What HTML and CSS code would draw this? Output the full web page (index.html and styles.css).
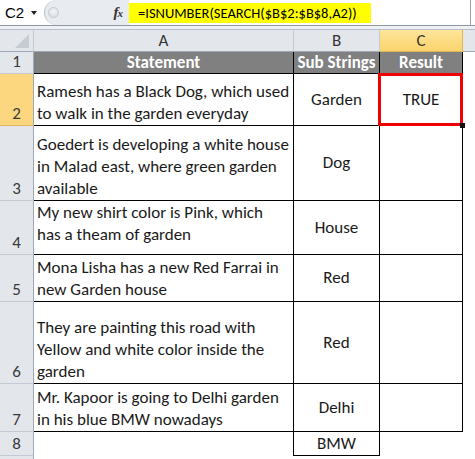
FILE: index.html
```html
<!DOCTYPE html>
<html>
<head>
<meta charset="utf-8">
<link rel="stylesheet" href="styles.css">
</head>
<body>
<div class="app">
  <div class="fbar">
    <div class="namebox"><span class="ref">C2</span><span class="drop"></span></div>
    <div class="grip"><span class="knob"></span><span class="fx">f<sub>x</sub></span></div>
    <div class="formula"><span class="ftext">=ISNUMBER(SEARCH($B$2:$B$8,A2))</span></div>
    <div class="fend"></div>
  </div>
  <div class="sep"></div>
  <div class="sheet">
    <div class="ch corner"><span class="tri"></span></div>
    <div class="ch">A</div>
    <div class="ch">B</div>
    <div class="ch sel">C</div>
    <div class="ch last"></div>

    <div class="rh">1</div>
    <div class="c hd">Statement</div>
    <div class="c hd">Sub Strings</div>
    <div class="c hd">Result</div>
    <div class="c e"></div>

    <div class="rh rsel">2</div>
    <div class="c a"><p>Ramesh has a Black Dog, which used<br>to walk in the garden everyday</p></div>
    <div class="c b">Garden</div>
    <div class="c b cur">TRUE<span class="selbox"></span><span class="handle"></span></div>
    <div class="c e"></div>

    <div class="rh">3</div>
    <div class="c a"><p>Goedert is developing a white house<br>in Malad east, where green garden<br>available</p></div>
    <div class="c b">Dog</div>
    <div class="c b"></div>
    <div class="c e"></div>

    <div class="rh">4</div>
    <div class="c a r4"><p>My new shirt color is Pink, which<br>has a theam of garden</p></div>
    <div class="c b">House</div>
    <div class="c b"></div>
    <div class="c e"></div>

    <div class="rh">5</div>
    <div class="c a"><p>Mona Lisha has a new Red Farrai in<br>new Garden house</p></div>
    <div class="c b">Red</div>
    <div class="c b"></div>
    <div class="c e"></div>

    <div class="rh">6</div>
    <div class="c a"><p>They are painting this road with<br>Yellow and white color inside the<br>garden</p></div>
    <div class="c b">Red</div>
    <div class="c b"></div>
    <div class="c e"></div>

    <div class="rh">7</div>
    <div class="c a"><p>Mr. Kapoor is going to Delhi garden<br>in his blue BMW nowadays</p></div>
    <div class="c b">Delhi</div>
    <div class="c b"></div>
    <div class="c e"></div>

    <div class="rh">8</div>
    <div class="c a8"></div>
    <div class="c b">BMW</div>
    <div class="c e"></div>
    <div class="c e"></div>

    <div class="rh rest"></div>
    <div class="c e"></div>
    <div class="c e"></div>
    <div class="c e"></div>
    <div class="c e"></div>
  </div>
</div>
</body>
</html>
```

FILE: styles.css
```css
* { box-sizing: border-box; }
html, body { margin: 0; padding: 0; }
body {
  width: 475px;
  height: 459px;
  overflow: hidden;
  background: #fff;
  font-family: "Carlito", "Liberation Sans", Arial, sans-serif;
  color: #1a1a1a;
}
p { margin: 0; }
.app { width: 475px; height: 459px; display: flex; flex-direction: column; }

.fbar {
  height: 26px;
  display: flex;
  border-bottom: 1px solid #8e98a6;
  background: #fff;
}
.namebox {
  width: 44px;
  display: flex;
  align-items: center;
  padding-left: 5px;
  font-family: "Liberation Sans", Arial, sans-serif;
  font-size: 15px;
  color: #000;
}
.ref { width: 24px; }
.drop {
  width: 0; height: 0;
  border-left: 3.5px solid transparent;
  border-right: 3.5px solid transparent;
  border-top: 4px solid #222;
  margin-left: 2px;
  margin-top: 1px;
}
.grip {
  width: 85px;
  background: #e8ebef;
  border-radius: 13px 0 0 13px;
  border-left: 1px solid #b9c0c9;
  display: flex;
  align-items: center;
  justify-content: space-between;
  padding: 0 7px 0 3px;
}
.knob {
  width: 11px; height: 11px;
  border-radius: 50%;
  background: radial-gradient(circle at 50% 40%, #f4f5f7, #d4d8de);
  border: 1px solid #c5cad1;
}
.fx {
  font-family: "Liberation Serif", serif;
  font-style: italic;
  font-weight: bold;
  font-size: 15px;
  color: #333;
  letter-spacing: -1px;
}
.fx sub { font-size: 11px; vertical-align: 0; }
.formula {
  width: 242px;
  margin: 3px 0 2px 0;
  background: #ffff00;
  display: flex;
  align-items: center;
  padding-left: 9px;
  font-size: 14.5px;
  color: #000;
}
.fend {
  flex: 1;
  border-right: 1px solid #9aa3ae;
  margin-right: 4px;
}
.sep { height: 3px; background: #eef0f3; }

.sheet {
  flex: 1;
  display: grid;
  grid-template-columns: 34px 260px 86px 83px 12px;
  grid-template-rows: 23px 22px 52px 75px 54px 47px 82px 48px 24px 1fr;
}
.ch {
  background: #e3e7ec;
  border-top: 1px solid #b7bfca;
  border-right: 1px solid #c4cad3;
  border-bottom: 1px solid #9ea8b5;
  display: flex;
  align-items: center;
  justify-content: center;
  font-size: 17px;
  color: #333;
}
.ch.last { border-right: none; }
.ch.sel {
  background: linear-gradient(#fde59a, #fbd46c);
  border-right: 1px solid #e2b458;
  border-bottom: 1px solid #e2b458;
}
.corner { position: relative; }
.tri {
  position: absolute;
  right: 4px; bottom: 3px;
  width: 0; height: 0;
  border-left: 14px solid transparent;
  border-bottom: 14px solid #c6ccd4;
}
.rh {
  background: #e3e7ec;
  border-right: 1px solid #9ea8b5;
  border-bottom: 1px solid #c4cad3;
  display: flex;
  align-items: flex-end;
  justify-content: center;
  line-height: 22px;
  font-size: 17px;
  color: #3a3a3a;
}
.rh.rsel { background: #fcd77f; border-bottom-color: #e2b458; }
.rh.rest { border-bottom: none; }
.c {
  font-size: 17px;
  line-height: 22px;
  border-right: 1px solid #000;
  border-bottom: 1px solid #000;
}
.c.e { border: none; }
.c.hd {
  background: #808080;
  color: #fff;
  font-weight: bold;
  display: flex;
  align-items: center;
  justify-content: center;
}
.c.a {
  display: flex;
  align-items: flex-end;
  padding: 0 2px 0 3px;
  white-space: nowrap;
}
.c.a.r4 { padding-bottom: 8px; }
.c.a8 { border-bottom: none; }
.c.b {
  display: flex;
  align-items: center;
  justify-content: center;
}
.cur { position: relative; }
.selbox {
  position: absolute;
  left: -2px; top: -1px;
  width: 85px; height: 53px;
  border: 3px solid #ee0000;
}
.handle {
  position: absolute;
  right: -3px; bottom: -3px;
  width: 5px; height: 5px;
  background: #111;
}
```
